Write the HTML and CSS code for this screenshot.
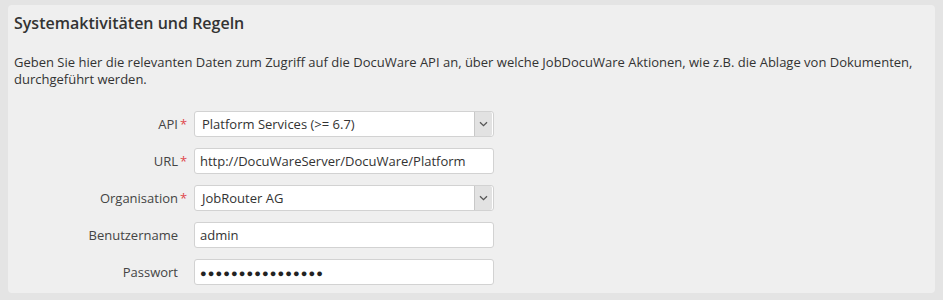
FILE: index.html
```html
<!DOCTYPE html>
<html lang="de">
<head>
<meta charset="utf-8">
<link rel="stylesheet" href="styles.css">
</head>
<body>
<div class="card">
  <h2 class="title">Systemaktivitäten und Regeln</h2>
  <p class="desc">Geben Sie hier die relevanten Daten zum Zugriff auf die DocuWare API an, über welche JobDocuWare Aktionen, wie z.B. die Ablage von Dokumenten, durchgeführt werden.</p>
  <div class="form">
    <div class="row">
      <label class="label">API<span class="req">*</span></label>
      <div class="select"><span class="val">Platform Services (&gt;= 6.7)</span><span class="arrow"><svg width="9" height="6" viewBox="0 0 9 6"><path d="M1 1.2 L4.5 4.6 L8 1.2" fill="none" stroke="#555" stroke-width="1.3"/></svg></span></div>
    </div>
    <div class="row">
      <label class="label">URL<span class="req">*</span></label>
      <div class="input">http://DocuWareServer/DocuWare/Platform</div>
    </div>
    <div class="row">
      <label class="label">Organisation<span class="req">*</span></label>
      <div class="select"><span class="val">JobRouter AG</span><span class="arrow"><svg width="9" height="6" viewBox="0 0 9 6"><path d="M1 1.2 L4.5 4.6 L8 1.2" fill="none" stroke="#555" stroke-width="1.3"/></svg></span></div>
    </div>
    <div class="row">
      <label class="label">Benutzername<span class="req"></span></label>
      <div class="input">admin</div>
    </div>
    <div class="row">
      <label class="label">Passwort<span class="req"></span></label>
      <div class="input pw">&#9679;&#9679;&#9679;&#9679;&#9679;&#9679;&#9679;&#9679;&#9679;&#9679;&#9679;&#9679;&#9679;&#9679;&#9679;&#9679;</div>
    </div>
  </div>
</div>
</body>
</html>
```
FILE: styles.css
```css
html, body {
  margin: 0;
  padding: 0;
  background: #e4e4e4;
  font-family: "Open Sans", "Liberation Sans", sans-serif;
  color: #333;
}
body {
  padding: 5px 8px 0 8px;
}
.card {
  background: #efefef;
  border-radius: 4px;
  height: 288px;
  box-sizing: border-box;
  padding: 7px 6px 0 6px;
}
.title {
  margin: 0;
  font-size: 16px;
  font-weight: 600;
  line-height: 22px;
  color: #333;
}
.desc {
  margin: 20px 0 0 0;
  font-size: 13px;
  line-height: 17px;
  color: #333;
}
.form {
  margin-top: 23px;
  display: flex;
  flex-direction: column;
  gap: 11px;
}
.row {
  display: flex;
  align-items: center;
}
.label {
  width: 180px;
  text-align: right;
  font-size: 13px;
  color: #444;
  padding-right: 6px;
  box-sizing: border-box;
  display: flex;
  justify-content: flex-end;
}
.label .req {
  color: #e0474c;
  margin-left: 2px;
  width: 8px;
  text-align: left;
}
.select, .input {
  width: 300px;
  height: 26px;
  box-sizing: border-box;
  border: 1px solid #d2d2d2;
  border-radius: 3px;
  background: #fff;
  font-size: 13px;
  color: #333;
  display: flex;
  align-items: center;
}
.input {
  padding-left: 5px;
}
.select .val {
  flex: 1;
  padding-left: 7px;
}
.select .arrow {
  width: 17px;
  height: 100%;
  background: #e2e2e2;
  border-left: 1px solid #c8c8c8;
  display: flex;
  align-items: center;
  justify-content: center;
  border-radius: 0 2px 2px 0;
  margin-right: 1px;
}
.pw {
  font-size: 11px;
  letter-spacing: 1.1px;
  color: #222;
}
```
